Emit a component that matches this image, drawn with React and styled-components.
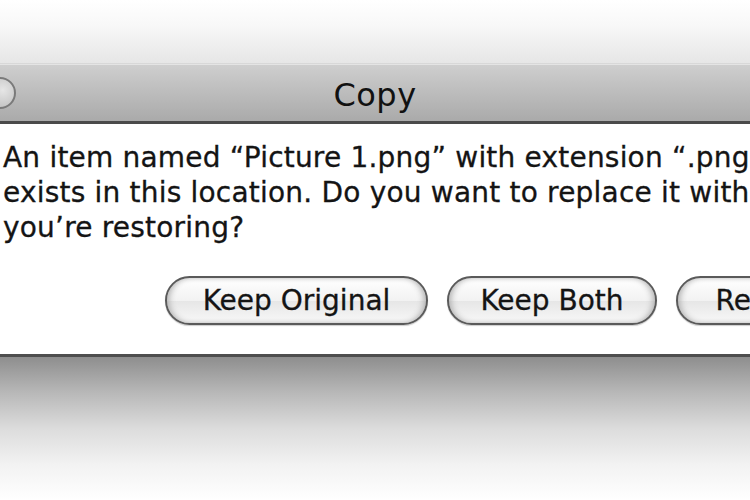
import styled, { createGlobalStyle } from 'styled-components'

const GlobalStyle = createGlobalStyle`
  html, body {
    margin: 0;
    padding: 0;
    width: 750px;
    height: 500px;
    overflow: hidden;
    background: #ffffff;
  }
`

const Page = styled.div`
  width: 750px;
  height: 500px;
  display: flex;
  flex-direction: column;
  font-family: 'DejaVu Sans', 'Liberation Sans', sans-serif;
  overflow: hidden;
`

const Backdrop = styled.div`
  height: 63px;
  background: linear-gradient(#ffffff 0%, #f8f8f8 40%, #e6e6e6 100%);
`

const TitleBar = styled.div`
  height: 57px;
  display: flex;
  align-items: center;
  justify-content: center;
  position: relative;
  border-top: 1px solid #d8d8d8;
  border-bottom: 3px solid #4a4a4a;
  background: linear-gradient(#cfcfcf 0%, #c0c0c0 40%, #aaaaaa 100%);
  box-shadow: inset 0 1px 0 #e4e4e4;
`

const CloseDot = styled.span`
  position: absolute;
  left: -16px;
  top: 13px;
  width: 28px;
  height: 28px;
  border-radius: 50%;
  border: 2px solid #7a7a7a;
  background: radial-gradient(circle at 60% 40%, #e6e6e6, #b8b8b8);
`

const Title = styled.h1`
  margin: 4px 0 0;
  font-size: 32px;
  font-weight: normal;
  color: #111111;
  letter-spacing: 0.5px;
`

const Body = styled.div`
  height: 230px;
  background: #ffffff;
  display: flex;
  flex-direction: column;
  padding-top: 16px;
  box-sizing: border-box;
`

const Message = styled.p`
  margin: 0 0 0 3px;
  font-size: 28px;
  line-height: 35px;
  letter-spacing: 0.2px;
  color: #141414;
  white-space: nowrap;
  -webkit-text-stroke: 0.3px #141414;
`

const ButtonRow = styled.div`
  display: flex;
  gap: 19px;
  padding-left: 165px;
  margin-top: 31px;
`

const PillButton = styled.button`
  flex: none;
  width: ${({ $width }) => $width}px;
  height: 49px;
  padding: 0;
  border-radius: 25px;
  border: 2px solid #5a5a5a;
  background: linear-gradient(#ffffff 0%, #f2f2f2 50%, #e6e6e6 51%, #f8f8f8 100%);
  box-shadow: inset 4px 0 6px -2px #b0b0b0, inset -4px 0 6px -2px #b0b0b0,
    0 1px 1px #cccccc;
  font-family: 'DejaVu Sans', 'Liberation Sans', sans-serif;
  font-size: 28px;
  color: #141414;
  -webkit-text-stroke: 0.3px #141414;
  white-space: nowrap;
`

const Shadow = styled.div`
  flex: 1;
  border-top: 3px solid #4e4e4e;
  background: linear-gradient(#8e8e8e 0%, #b8b8b8 25%, #dcdcdc 50%, #f2f2f2 75%, #ffffff 100%);
`

export default function App() {
  return (
    <Page>
      <GlobalStyle />
      <Backdrop />
      <TitleBar>
        <CloseDot />
        <Title>Copy</Title>
      </TitleBar>
      <Body>
        <Message>
          An item named “Picture 1.png” with extension “.png” already
          <br />
          exists in this location. Do you want to replace it with the one
          <br />
          you’re restoring?
        </Message>
        <ButtonRow>
          <PillButton $width={263}>Keep Original</PillButton>
          <PillButton $width={210}>Keep Both</PillButton>
          <PillButton $width={190}>Replace</PillButton>
        </ButtonRow>
      </Body>
      <Shadow />
    </Page>
  )
}
